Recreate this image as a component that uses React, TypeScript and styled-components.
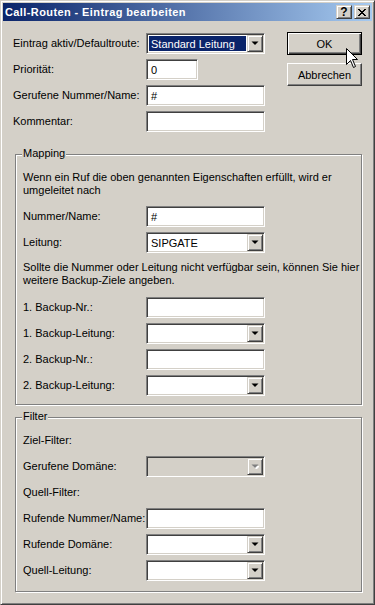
import styled, { createGlobalStyle } from 'styled-components';

const GlobalStyle = createGlobalStyle`
  html, body {
    margin: 0;
    padding: 0;
    background: #d4d0c8;
  }
  body {
    font-family: "Liberation Sans", Arial, sans-serif;
    font-size: 11px;
    color: #000;
  }
`;

const Window = styled.div`
  position: relative;
  box-sizing: border-box;
  width: 375px;
  height: 605px;
  padding: 2px;
  background: #d4d0c8;
  border: 1px solid;
  border-color: #d4d0c8 #404040 #404040 #d4d0c8;
  box-shadow: inset 1px 1px #fff, inset -1px -1px #808080;
  display: flex;
  flex-direction: column;
`;

const TitleBar = styled.div`
  height: 18px;
  display: flex;
  align-items: center;
  padding-left: 2px;
  background: linear-gradient(to right, #0a246a, #a6caf0);
  color: #fff;
  font-weight: bold;
  font-size: 11px;
  letter-spacing: 0.4px;
`;

const TitleText = styled.span`
  white-space: nowrap;
`;

const CaptionButtons = styled.div`
  margin-left: auto;
  margin-right: 2px;
  display: flex;
  gap: 2px;
`;

const CaptionButton = styled.div`
  box-sizing: border-box;
  width: 16px;
  height: 14px;
  display: flex;
  align-items: center;
  justify-content: center;
  background: #d4d0c8;
  border: 1px solid;
  border-color: #d4d0c8 #404040 #404040 #d4d0c8;
  box-shadow: inset 1px 1px #fff, inset -1px -1px #808080;
  color: #000;
  font-weight: bold;
  font-size: 12px;
  line-height: 12px;
  letter-spacing: 0;
`;

const Body = styled.div`
  display: flex;
  flex-direction: column;
  padding: 11px 10px 0 10px;
`;

const TopSection = styled.div`
  display: flex;
  align-items: flex-start;
`;

const FieldGrid = styled.div<{ $labelWidth: number }>`
  display: grid;
  grid-template-columns: ${p => p.$labelWidth}px auto;
  grid-auto-rows: 21px;
  row-gap: 5px;
  align-items: center;
`;

const TopForm = styled(FieldGrid)`
  margin-top: 1px;
`;

const Label = styled.div`
  white-space: nowrap;
  line-height: 13px;
`;

const SectionLabel = styled(Label)`
  grid-column: 1 / -1;
`;

const ButtonColumn = styled.div`
  margin-left: 22px;
  display: flex;
  flex-direction: column;
  gap: 8px;
`;

const PushButton = styled.div<{ $default?: boolean }>`
  box-sizing: border-box;
  width: 75px;
  height: 23px;
  display: flex;
  align-items: center;
  justify-content: center;
  background: #d4d0c8;
  border: 1px solid;
  border-color: ${p => (p.$default ? '#000' : '#fff #404040 #404040 #fff')};
  box-shadow: ${p =>
    p.$default
      ? 'inset 1px 1px #fff, inset -1px -1px #404040, inset -2px -2px #808080'
      : 'inset -1px -1px #808080'};
`;

const sunken = `
  box-sizing: border-box;
  height: 21px;
  border: 1px solid;
  border-color: #808080 #fff #fff #808080;
  box-shadow: inset 1px 1px #404040, inset -1px -1px #d4d0c8;
`;

const TextBox = styled.div<{ $width?: number }>`
  ${sunken}
  width: ${p => p.$width ?? 119}px;
  background: #fff;
  padding: 0 4px;
  display: flex;
  align-items: center;
  white-space: nowrap;
`;

const Combo = styled.div<{ $disabled?: boolean }>`
  ${sunken}
  width: 119px;
  padding: 1px;
  display: flex;
  background: ${p => (p.$disabled ? '#d4d0c8' : '#fff')};
`;

const ComboValue = styled.div<{ $selected?: boolean }>`
  flex: 1;
  margin: 1px;
  padding: 0 2px;
  display: flex;
  align-items: center;
  white-space: nowrap;
  background: ${p => (p.$selected ? '#0a246a' : 'transparent')};
  color: ${p => (p.$selected ? '#fff' : '#000')};
`;

const ArrowButton = styled.div`
  box-sizing: border-box;
  width: 16px;
  height: 17px;
  display: flex;
  align-items: center;
  justify-content: center;
  background: #d4d0c8;
  border: 1px solid;
  border-color: #d4d0c8 #404040 #404040 #d4d0c8;
  box-shadow: inset 1px 1px #fff, inset -1px -1px #808080;
`;

const GroupBox = styled.div<{ $pad: string }>`
  position: relative;
  box-sizing: border-box;
  width: 347px;
  margin-left: 2px;
  padding: ${p => p.$pad};
  border: 1px solid #808080;
  box-shadow: inset 1px 1px #fff, 1px 1px #fff;
  display: flex;
  flex-direction: column;
`;

const MappingGroup = styled(GroupBox)`
  margin-top: 22px;
`;

const FilterGroup = styled(GroupBox)`
  margin-top: 12px;
`;

const Legend = styled.div`
  position: absolute;
  top: -8px;
  left: 6px;
  padding: 0 1px;
  background: #d4d0c8;
  line-height: 13px;
  white-space: nowrap;
`;

const Note = styled.div<{ $mt: number; $mb: number }>`
  line-height: 13px;
  white-space: nowrap;
  margin: ${p => p.$mt}px 0 ${p => p.$mb}px;
`;

const Cursor = styled.svg`
  position: absolute;
  left: 345px;
  top: 47px;
`;

const DropArrow = ({ disabled }: { disabled?: boolean }) => (
  <svg width="8" height="5" viewBox="0 0 8 5">
    {disabled && <path d="M2 2h7l-3.5 3.5z" fill="#fff" />}
    <path d="M0.5 0.5h7l-3.5 3.5z" fill={disabled ? '#808080' : '#000'} />
  </svg>
);

const ComboBox = ({ value, selected, disabled }: { value?: string; selected?: boolean; disabled?: boolean }) => (
  <Combo $disabled={disabled}>
    <ComboValue $selected={selected}>{value}</ComboValue>
    <ArrowButton>
      <DropArrow disabled={disabled} />
    </ArrowButton>
  </Combo>
);

export default function App() {
  return (
    <>
      <GlobalStyle />
      <Window>
        <TitleBar>
          <TitleText>Call-Routen - Eintrag bearbeiten</TitleText>
          <CaptionButtons>
            <CaptionButton>?</CaptionButton>
            <CaptionButton>
              <svg width="8" height="7" viewBox="0 0 8 7">
                <path
                  d="M0 0h2v1h-2z M6 0h2v1h-2z M1 1h2v1h-2z M5 1h2v1h-2z M2 2h4v1h-4z M3 3h2v1h-2z M2 4h4v1h-4z M1 5h2v1h-2z M5 5h2v1h-2z M0 6h2v1h-2z M6 6h2v1h-2z"
                  fill="#000"
                />
              </svg>
            </CaptionButton>
          </CaptionButtons>
        </TitleBar>

        <Body>
          <TopSection>
            <TopForm $labelWidth={133}>
              <Label>Eintrag aktiv/Defaultroute:</Label>
              <ComboBox value="Standard Leitung" selected />
              <Label>Priorität:</Label>
              <TextBox $width={52}>0</TextBox>
              <Label>Gerufene Nummer/Name:</Label>
              <TextBox>#</TextBox>
              <Label>Kommentar:</Label>
              <TextBox />
            </TopForm>
            <ButtonColumn>
              <PushButton $default>OK</PushButton>
              <PushButton>Abbrechen</PushButton>
            </ButtonColumn>
          </TopSection>

          <MappingGroup $pad="16px 7px 8px">
            <Legend>Mapping</Legend>
            <Note $mt={0} $mb={9}>
              Wenn ein Ruf die oben genannten Eigenschaften erfüllt, wird er
              <br />
              umgeleitet nach
            </Note>
            <FieldGrid $labelWidth={123}>
              <Label>Nummer/Name:</Label>
              <TextBox>#</TextBox>
              <Label>Leitung:</Label>
              <ComboBox value="SIPGATE" />
            </FieldGrid>
            <Note $mt={8} $mb={10}>
              Sollte die Nummer oder Leitung nicht verfügbar sein, können Sie hier
              <br />
              weitere Backup-Ziele angeben.
            </Note>
            <FieldGrid $labelWidth={123}>
              <Label>1. Backup-Nr.:</Label>
              <TextBox />
              <Label>1. Backup-Leitung:</Label>
              <ComboBox />
              <Label>2. Backup-Nr.:</Label>
              <TextBox />
              <Label>2. Backup-Leitung:</Label>
              <ComboBox />
            </FieldGrid>
          </MappingGroup>

          <FilterGroup $pad="12px 7px 10px">
            <Legend>Filter</Legend>
            <FieldGrid $labelWidth={123}>
              <SectionLabel>Ziel-Filter:</SectionLabel>
              <Label>Gerufene Domäne:</Label>
              <ComboBox disabled />
              <SectionLabel>Quell-Filter:</SectionLabel>
              <Label>Rufende Nummer/Name:</Label>
              <TextBox />
              <Label>Rufende Domäne:</Label>
              <ComboBox />
              <Label>Quell-Leitung:</Label>
              <ComboBox />
            </FieldGrid>
          </FilterGroup>
        </Body>

        <Cursor width="13" height="21" viewBox="0 0 13 21">
          <path
            d="M0.5 0.5 L0.5 16.5 L4.5 12.5 L7.5 19.5 L9.5 18.5 L6.5 11.5 L11.5 11.5 Z"
            fill="#fff"
            stroke="#000"
            strokeWidth="1"
          />
        </Cursor>
      </Window>
    </>
  );
}
